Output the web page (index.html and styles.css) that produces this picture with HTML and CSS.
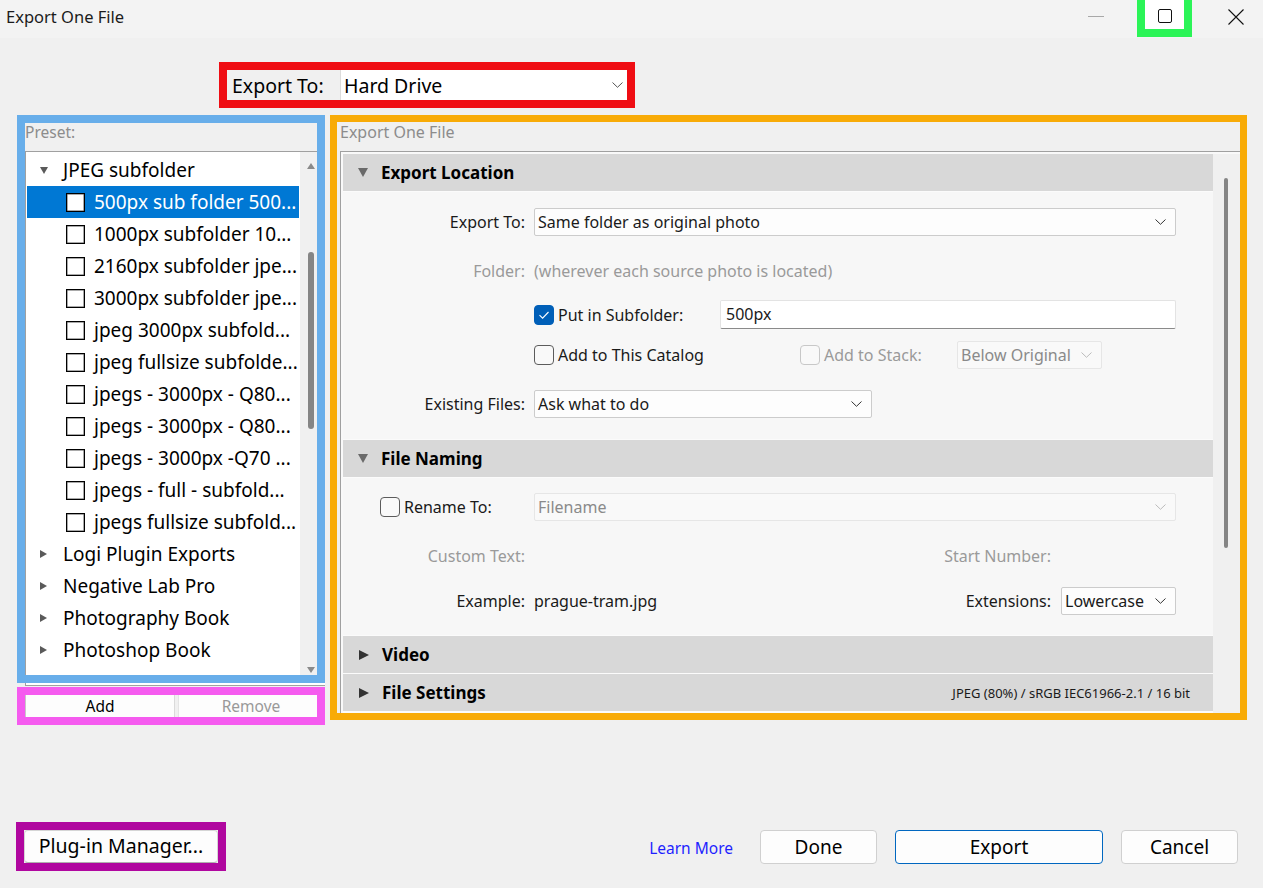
FILE: index.html
```html
<!DOCTYPE html>
<html lang="en">
<head>
    <meta charset="UTF-8">
    <title>Export One File</title>
    <link rel="stylesheet" href="styles.css">
</head>
<body>
<div class="window">

    <!-- title bar -->
    <div class="titlebar">
        <span class="title">Export One File</span>
        <span class="wc-min"></span>
        <span class="wc-max"><span class="wc-max-icon"></span></span>
        <svg class="wc-close" width="16" height="16" viewBox="0 0 16 16">
            <path d="M0.5 0.5 L15.5 15.5 M15.5 0.5 L0.5 15.5" stroke="#111" stroke-width="1.1" fill="none"/>
        </svg>
    </div>

    <!-- export to -->
    <div class="export-bar">
        <div class="export-to">
            <span class="export-to-label">Export To:</span>
            <div class="export-to-select">
                <span>Hard Drive</span>
                <svg width="11" height="6" viewBox="0 0 11 6"><path d="M0.5 0.5 L5.5 5.3 L10.5 0.5" fill="none" stroke="#555" stroke-width="1"/></svg>
            </div>
        </div>
    </div>

    <div class="main">
        <!-- presets -->
        <div class="left-col">
            <div class="preset-box">
                <div class="preset-title">Preset:</div>
                <div class="preset-list">
                    <div class="tree">
                        <div class="tree-row folder"><span class="tri-open"></span>JPEG subfolder</div>
                        <div class="tree-row preset selected"><span class="cb"></span>500px sub folder 500...</div>
                        <div class="tree-row preset"><span class="cb"></span>1000px subfolder 10...</div>
                        <div class="tree-row preset"><span class="cb"></span>2160px subfolder jpe...</div>
                        <div class="tree-row preset"><span class="cb"></span>3000px subfolder jpe...</div>
                        <div class="tree-row preset"><span class="cb"></span>jpeg 3000px subfold...</div>
                        <div class="tree-row preset"><span class="cb"></span>jpeg fullsize subfolde...</div>
                        <div class="tree-row preset"><span class="cb"></span>jpegs - 3000px - Q80...</div>
                        <div class="tree-row preset"><span class="cb"></span>jpegs - 3000px - Q80...</div>
                        <div class="tree-row preset"><span class="cb"></span>jpegs - 3000px -Q70 ...</div>
                        <div class="tree-row preset"><span class="cb"></span>jpegs - full - subfold...</div>
                        <div class="tree-row preset"><span class="cb"></span>jpegs fullsize subfold...</div>
                        <div class="tree-row folder"><span class="tri-closed"></span>Logi Plugin Exports</div>
                        <div class="tree-row folder"><span class="tri-closed"></span>Negative Lab Pro</div>
                        <div class="tree-row folder"><span class="tri-closed"></span>Photography Book</div>
                        <div class="tree-row folder"><span class="tri-closed"></span>Photoshop Book</div>
                    </div>
                    <div class="list-scroll">
                        <span class="arrow-up"></span>
                        <span class="list-thumb"></span>
                        <span class="arrow-down"></span>
                    </div>
                </div>
            </div>
            <div class="list-tail"></div>
            <div class="preset-actions">
                <div class="pa-btn pa-add">Add</div>
                <div class="pa-btn pa-remove">Remove</div>
            </div>
        </div>

        <!-- settings -->
        <div class="settings-box">
            <div class="settings-title">Export One File</div>
            <div class="settings-panel">
                <div class="sections">

                    <div class="sec-head"><span class="tri-down"></span>Export Location</div>
                    <div class="sec-body location">
                        <div class="field">
                            <span class="field-label">Export To:</span>
                            <div class="select wide">
                                <span>Same folder as original photo</span>
                                <svg width="11" height="6" viewBox="0 0 11 6"><path d="M0.5 0.5 L5.5 5.3 L10.5 0.5" fill="none" stroke="#333" stroke-width="1"/></svg>
                            </div>
                        </div>
                        <div class="field gap-21 muted">
                            <span class="field-label">Folder:</span>
                            <span>(wherever each source photo is located)</span>
                        </div>
                        <div class="field gap-16 tall">
                            <span class="field-label"></span>
                            <label class="check-group subfolder">
                                <span class="check on">
                                    <svg width="18" height="18" viewBox="0 0 18 18"><path d="M4.5 9.2 L7.6 12.2 L13.5 6" fill="none" stroke="#fff" stroke-width="1.1"/></svg>
                                </span>
                                Put in Subfolder:
                            </label>
                            <div class="text-input">500px</div>
                        </div>
                        <div class="field gap-12">
                            <span class="field-label"></span>
                            <label class="check-group catalog"><span class="check"></span>Add to This Catalog</label>
                            <label class="check-group stack muted"><span class="check disabled"></span>Add to Stack:</label>
                            <div class="select disabled stack-select">
                                <span>Below Original</span>
                                <svg width="11" height="6" viewBox="0 0 11 6"><path d="M0.5 0.5 L5.5 5.3 L10.5 0.5" fill="none" stroke="#bbb" stroke-width="1"/></svg>
                            </div>
                        </div>
                        <div class="field gap-21">
                            <span class="field-label">Existing Files:</span>
                            <div class="select existing">
                                <span>Ask what to do</span>
                                <svg width="11" height="6" viewBox="0 0 11 6"><path d="M0.5 0.5 L5.5 5.3 L10.5 0.5" fill="none" stroke="#333" stroke-width="1"/></svg>
                            </div>
                        </div>
                    </div>

                    <div class="sec-head"><span class="tri-down"></span>File Naming</div>
                    <div class="sec-body naming">
                        <div class="field">
                            <label class="field-label check-label"><span class="check"></span>Rename To:</label>
                            <div class="select wide disabled">
                                <span>Filename</span>
                                <svg width="11" height="6" viewBox="0 0 11 6"><path d="M0.5 0.5 L5.5 5.3 L10.5 0.5" fill="none" stroke="#bbb" stroke-width="1"/></svg>
                            </div>
                        </div>
                        <div class="field gap-21 muted">
                            <span class="field-label">Custom Text:</span>
                            <span class="field-value"></span>
                            <span class="side-label">Start Number:</span>
                            <span class="side-slot"></span>
                        </div>
                        <div class="field gap-17">
                            <span class="field-label">Example:</span>
                            <span class="field-value">prague-tram.jpg</span>
                            <span class="side-label">Extensions:</span>
                            <div class="select side-slot">
                                <span>Lowercase</span>
                                <svg width="11" height="6" viewBox="0 0 11 6"><path d="M0.5 0.5 L5.5 5.3 L10.5 0.5" fill="none" stroke="#333" stroke-width="1"/></svg>
                            </div>
                        </div>
                    </div>

                    <div class="sec-head"><span class="tri-right"></span>Video</div>
                    <div class="sec-head"><span class="tri-right"></span>File Settings<span class="sec-summary">JPEG (80%) / sRGB IEC61966-2.1 / 16 bit</span></div>

                </div>
                <div class="panel-scroll"><span class="panel-thumb"></span></div>
            </div>
        </div>
    </div>

    <!-- bottom buttons -->
    <div class="footer">
        <div class="plugin-box"><div class="plugin-btn">Plug-in Manager...</div></div>
        <div class="footer-right">
            <a class="learn-more">Learn More</a>
            <div class="btn">Done</div>
            <div class="btn primary">Export</div>
            <div class="btn">Cancel</div>
        </div>
    </div>

</div>
</body>
</html>
```

FILE: styles.css
```css
* {
    box-sizing: border-box;
}
body {
    margin: 0;
    background-color: #f0f0f0;
    font-family: "Noto Sans", "Open Sans", sans-serif;
    color: #000;
}
.window {
    width: 1263px;
    height: 888px;
    overflow: hidden;
}

/* title bar */
.titlebar {
    display: flex;
    align-items: flex-start;
    height: 38px;
    background-color: #f3f3f3;
}
.title {
    padding-left: 6px;
    font-size: 16.5px;
    line-height: 34px;
    color: #1b1b1b;
}
.wc-min {
    width: 16px;
    height: 1px;
    margin: 16px 33px 0 auto;
    background-color: #a8a8a8;
}
.wc-max {
    display: flex;
    justify-content: center;
    width: 55px;
    height: 37px;
    padding-top: 9px;
    margin-right: 36px;
    border: 8px solid #2bf457;
    border-top: 0;
    background-color: #fff;
}
.wc-max-icon {
    width: 14px;
    height: 14px;
    border: 1px solid #111;
    border-radius: 2px;
}
.wc-close {
    margin: 9px 19px 0 0;
}

/* export to */
.export-bar {
    padding: 24px 0 0 219px;
}
.export-to {
    display: flex;
    width: 416px;
    height: 46px;
    border: 8px solid #ef0d13;
    font-size: 19.5px;
}
.export-to-label {
    width: 113px;
    padding-left: 5px;
    line-height: 32px;
    background-color: #f0f0f0;
}
.export-to-select {
    flex: 1;
    display: flex;
    align-items: center;
    justify-content: space-between;
    padding: 0 4px 0 3px;
    border-left: 1px solid #dcdcdc;
    background-color: #fff;
}

/* main area */
.main {
    display: flex;
    margin-top: 7px;
    padding-left: 17px;
}
.left-col {
    width: 308px;
}
.preset-box {
    display: flex;
    flex-direction: column;
    height: 568px;
    border: 8px solid #68aeea;
}
.preset-title {
    height: 28px;
    font-size: 15.5px;
    line-height: 19px;
    color: #8c8c8c;
}
.preset-list {
    flex: 1;
    display: flex;
    min-height: 0;
    overflow: hidden;
    border-top: 1px solid #a0a0a0;
    border-left: 1px solid #a0a0a0;
    background-color: #fff;
}
.tree {
    flex: 1;
    padding-top: 2px;
}
.tree-row {
    display: flex;
    align-items: center;
    height: 32px;
    font-size: 19px;
    white-space: nowrap;
}
.tree-row.folder {
    padding-left: 14px;
}
.tree-row.preset {
    padding-left: 40px;
}
.tree-row.selected {
    margin: 0 1px;
    padding-left: 39px;
    background-color: #0078d4;
    color: #fff;
}
.tri-open {
    width: 0;
    height: 0;
    margin-right: 15px;
    border-left: 4px solid transparent;
    border-right: 4px solid transparent;
    border-top: 7px solid #5a5a5a;
}
.tri-closed {
    width: 0;
    height: 0;
    margin-right: 16px;
    border-top: 4.5px solid transparent;
    border-bottom: 4.5px solid transparent;
    border-left: 7px solid #5a5a5a;
}
.cb {
    flex-shrink: 0;
    width: 19px;
    height: 19px;
    margin-right: 9px;
    border: 1px solid #000;
    box-shadow: inset 0 0 0 0.5px #555;
    background-color: #fff;
}
.list-scroll {
    display: flex;
    flex-direction: column;
    width: 17px;
    background-color: #f0f0f0;
}
.arrow-up, .arrow-down {
    width: 0;
    height: 0;
    margin-left: 7px;
    border-left: 4.5px solid transparent;
    border-right: 4.5px solid transparent;
}
.arrow-up {
    margin-top: 11px;
    border-bottom: 6px solid #8a8a8a;
}
.arrow-down {
    margin-top: auto;
    margin-bottom: 2px;
    border-top: 6px solid #8a8a8a;
}
.list-thumb {
    width: 6px;
    height: 177px;
    margin: 83px 0 0 8px;
    border-radius: 3px;
    background-color: #858585;
}
.list-tail {
    height: 3px;
    margin-left: 8px;
    border-left: 1px solid #a0a0a0;
    border-bottom: 1px solid #a0a0a0;
    background-color: #fff;
}
.preset-actions {
    display: flex;
    height: 38px;
    margin-top: 1px;
    border: 8px solid #f55bef;
    background-color: #f0f0f0;
}
.pa-btn {
    font-size: 15.5px;
    line-height: 22px;
    text-align: center;
    background-color: #fdfdfd;
}
.pa-add {
    width: 150px;
    border-left: 1px solid #c8c8c8;
    border-right: 1px solid #dadada;
}
.pa-remove {
    flex: 1;
    margin-left: 3px;
    padding-left: 6px;
    border-left: 1px solid #e4e4e4;
    color: #999;
}

/* settings panel */
.settings-box {
    display: flex;
    flex-direction: column;
    width: 917px;
    height: 605px;
    margin-left: 5px;
    overflow: hidden;
    border: 7px solid #f8ab07;
}
.settings-title {
    height: 29px;
    padding-left: 3px;
    font-size: 16px;
    line-height: 20px;
    color: #8c8c8c;
}
.settings-panel {
    flex: 1;
    display: flex;
    min-height: 0;
    margin-left: 3px;
    padding: 2px 0 0 2px;
    border-top: 1px solid #a0a0a0;
    border-left: 1px solid #a0a0a0;
    background-color: #f9f9f9;
}
.sections {
    display: flex;
    flex-direction: column;
    gap: 1px;
    width: 870px;
    background-color: #fbfbfb;
}
.sec-head {
    display: flex;
    align-items: center;
    flex-shrink: 0;
    height: 37px;
    padding-left: 15px;
    font-size: 17px;
    font-weight: 700;
    background-color: #d8d8d8;
}
.tri-down {
    width: 0;
    height: 0;
    margin-right: 13px;
    border-left: 5.5px solid transparent;
    border-right: 5.5px solid transparent;
    border-top: 9px solid #6a6a6a;
}
.tri-right {
    width: 0;
    height: 0;
    margin: 0 13px 0 1px;
    border-top: 5px solid transparent;
    border-bottom: 5px solid transparent;
    border-left: 10px solid #333;
}
.sec-summary {
    margin-left: auto;
    padding-right: 23px;
    font-size: 13px;
    font-weight: 400;
    color: #1a1a1a;
}
.sec-body {
    flex-shrink: 0;
    padding-right: 37px;
    background-color: #f7f7f7;
}
.sec-body.location {
    height: 247px;
    padding-top: 16px;
}
.sec-body.naming {
    height: 157px;
    padding-top: 15px;
}
.field {
    display: flex;
    align-items: center;
    height: 28px;
    font-size: 16px;
    color: #1a1a1a;
    white-space: nowrap;
}
.field.tall {
    height: 29px;
}
.gap-12 { margin-top: 12px; }
.gap-16 { margin-top: 15px; }
.gap-17 { margin-top: 17px; }
.gap-21 { margin-top: 21px; }
.muted {
    color: #9a9a9a;
}
.field-label {
    flex-shrink: 0;
    width: 182px;
    margin-right: 9px;
    text-align: right;
}
.check-label {
    display: flex;
    align-items: center;
    padding-left: 37px;
    text-align: left;
}
.field-value {
    flex: 1;
}
.side-label {
    margin-right: 10px;
}
.side-slot {
    width: 115px;
}
.check-group {
    display: flex;
    align-items: center;
}
.check-group.subfolder { width: 186px; }
.check-group.catalog { width: 266px; }
.check-group.stack { width: 157px; }
.check {
    flex-shrink: 0;
    width: 20px;
    height: 20px;
    margin-right: 4px;
    border: 1px solid #5c5c5c;
    border-radius: 4px;
    background-color: #f9f9f9;
}
.check.on {
    border-color: #005fb8;
    background-color: #005fb8;
}
.check.disabled {
    border-color: #c8c8c8;
}
.select {
    display: flex;
    align-items: center;
    justify-content: space-between;
    height: 28px;
    padding: 0 9px 0 3px;
    border: 1px solid #cccccc;
    border-radius: 2px;
    background-color: #fdfdfd;
    color: #1a1a1a;
}
.select.wide {
    flex: 1;
}
.select.disabled {
    border-color: #e6e6e6;
    background-color: #f9f9f9;
    color: #8a8a8a;
}
.stack-select {
    width: 145px;
}
.existing {
    width: 338px;
}
.text-input {
    flex: 1;
    height: 29px;
    padding-left: 5px;
    line-height: 27px;
    border: 1px solid #e3e3e3;
    border-bottom-color: #8a8a8a;
    border-radius: 2px;
    background-color: #fff;
    color: #1a1a1a;
}
.panel-scroll {
    width: 27px;
    background-color: #f0f0f0;
}
.panel-thumb {
    display: block;
    width: 4px;
    height: 370px;
    margin: 24px 0 0 11px;
    border-radius: 2px;
    background-color: #858585;
}

/* footer */
.footer {
    display: flex;
    align-items: center;
    margin-top: 97px;
    padding: 0 25px 0 16px;
}
.plugin-box {
    width: 210px;
    height: 49px;
    border: 8px solid #b0079f;
}
.plugin-btn {
    height: 100%;
    border: 1px solid #d5d5d5;
    border-bottom-color: #b0b0b0;
    border-radius: 4px;
    background-color: #fdfdfd;
    font-size: 19.5px;
    line-height: 30px;
    text-align: center;
}
.footer-right {
    display: flex;
    align-items: center;
    gap: 18px;
    margin-left: auto;
}
.learn-more {
    margin: 2px 9px 0 0;
    font-size: 15.5px;
    color: #1f1fff;
}
.btn {
    display: flex;
    align-items: center;
    justify-content: center;
    width: 117px;
    height: 34px;
    border: 1px solid #d0d0d0;
    border-radius: 4px;
    background-color: #fdfdfd;
    font-size: 19px;
}
.btn.primary {
    width: 208px;
    border-color: #0067c0;
}
```
